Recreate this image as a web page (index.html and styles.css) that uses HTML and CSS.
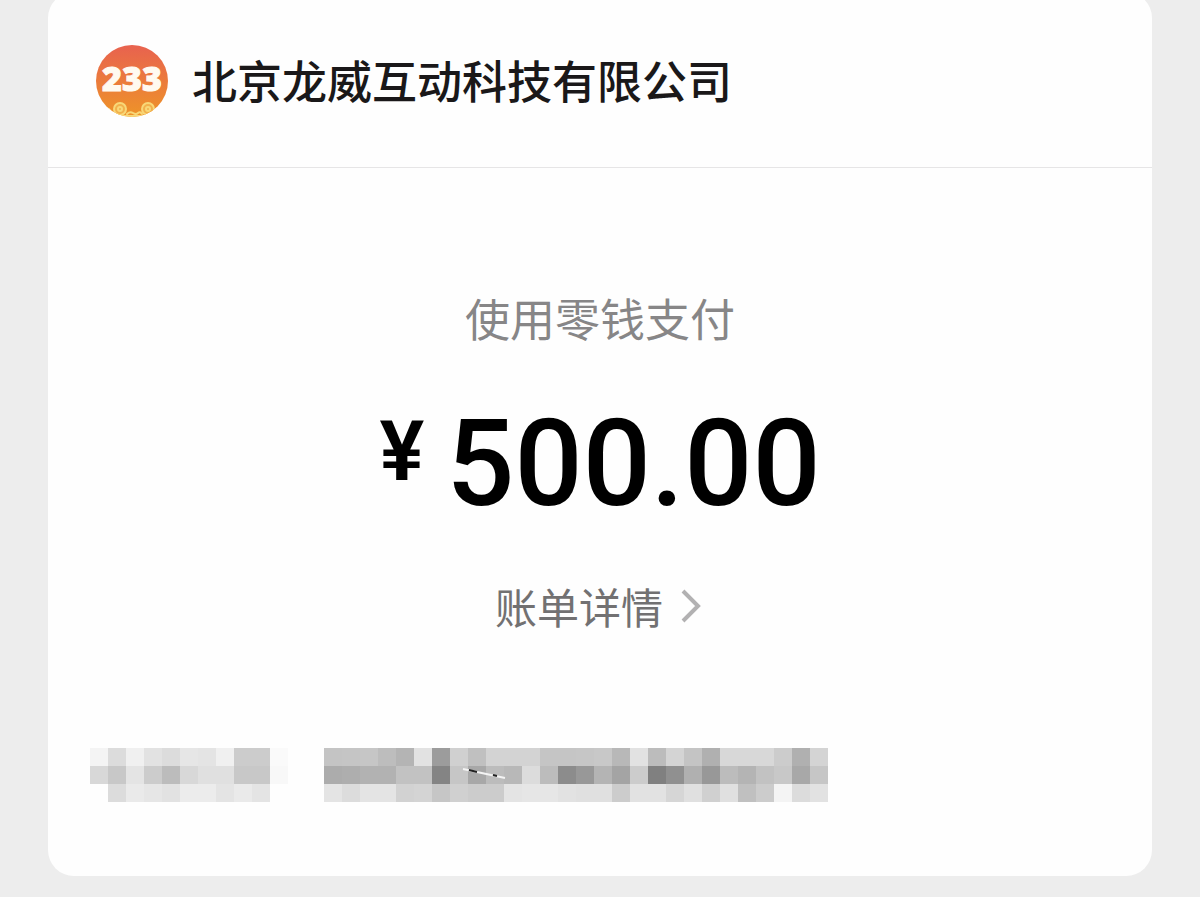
FILE: index.html
```html
<!DOCTYPE html>
<html lang="zh-CN">
<head>
  <meta charset="UTF-8" />
  <meta name="viewport" content="width=device-width, initial-scale=1" />
  <title>账单详情</title>
  <link rel="stylesheet" href="styles.css">
</head>
<body>
  <main class="card">
    <header class="merchant">
      <svg class="logo" viewBox="0 0 72 72" role="img" aria-label="233">
        <defs>
          <linearGradient id="logoBg" x1="0" y1="0" x2="0" y2="1">
            <stop offset="0" stop-color="#e8624f" />
            <stop offset="1" stop-color="#ee9428" />
          </linearGradient>
          <clipPath id="logoClip"><circle cx="36" cy="36" r="36" /></clipPath>
        </defs>
        <circle cx="36" cy="36" r="36" fill="url(#logoBg)" />
        <g clip-path="url(#logoClip)" fill="none" stroke="#f8d878" stroke-width="2" stroke-linecap="round">
          <circle cx="24" cy="64" r="6" fill="#f2b04c" />
          <circle cx="24" cy="64" r="2" />
          <circle cx="52" cy="64" r="6" fill="#f2b04c" />
          <circle cx="52" cy="64" r="2" />
          <path d="M13 64q3 5 8 6M31 69q3-3 6-1t5 0 4 1M24 71h28" />
        </g>
        <text class="logo-text" x="36" y="46" text-anchor="middle">233</text>
      </svg>
      <h1>北京龙威互动科技有限公司</h1>
    </header>

    <section class="payment">
      <p class="method">使用零钱支付</p>
      <p class="amount"><span class="currency">¥</span><span class="value">500.00</span></p>
      <a class="detail" href="#">账单详情
        <svg class="arrow" viewBox="0 0 20 34" aria-hidden="true">
          <path d="M2 2l15 15L2 32" />
        </svg>
      </a>
    </section>

    <div class="masked">
      <svg id="maskedInfo" viewBox="0 0 738 54" shape-rendering="crispEdges" aria-hidden="true"></svg>
    </div>
  </main>

  <script src="script.js"></script>
</body>
</html>
```
FILE: styles.css
```css
* {
  box-sizing: border-box;
}

body {
  margin: 0;
  background: #ededed;
  font-family: "Noto Sans CJK SC", sans-serif;
}

.card {
  margin: -8px 48px 20px;
  padding-bottom: 74px;
  background: #fefefe;
  border-radius: 26px;
}

.merchant {
  display: flex;
  align-items: center;
  gap: 24px;
  padding: 53px 48px 50px;
  border-bottom: 1px solid #e6e5e6;
}

.logo {
  flex: none;
  width: 72px;
  height: 72px;
}

.logo-text {
  font: 800 34px "Open Sans", sans-serif;
  fill: #fffaf0;
  stroke: #fffaf0;
  stroke-width: 1;
}

h1 {
  margin: 0;
  padding-bottom: 2px;
  font-size: 45px;
  font-weight: 500;
  line-height: 64px;
  color: #1a1819;
}

.payment {
  display: flex;
  flex-direction: column;
  align-items: center;
  padding-top: 118px;
}

.method {
  margin: 0;
  font-size: 45px;
  line-height: 64px;
  color: #878687;
}

.amount {
  display: flex;
  align-items: flex-start;
  gap: 22px;
  margin: 44px 0 42px;
  font-family: Roboto, sans-serif;
  font-weight: 500;
  color: #000;
}

.currency {
  padding-top: 16px;
  font-size: 84px;
  font-weight: 600;
  line-height: 84px;
}

.value {
  font-size: 120px;
  line-height: 140px;
}

.detail {
  display: flex;
  align-items: center;
  gap: 18px;
  padding-right: 4px;
  font-size: 42px;
  line-height: 60px;
  color: #727172;
  text-decoration: none;
}

.arrow {
  width: 20px;
  height: 34px;
  fill: none;
  stroke: #b2b1b2;
  stroke-width: 4;
}

.masked {
  padding: 112px 42px 0;
}

.masked svg {
  display: block;
  width: 100%;
  max-width: 738px;
}
```
FILE: script.js
```js
// Grey levels of the masked text, three rows of 18px cells per block
const blocks = [
  { x: 0, rows: [
    "f4 dc f0 e2 dc e6 e4 f0 cc cc fa",
    "d8 c8 e4 cc bc d8 e0 e0 c8 c8 f8",
    "fe dc ea e6 e2 ec ec e4 ea e4 fe"
  ] },
  { x: 234, rows: [
    "c4 c5 c6 bd b4 e2 9c d0 c0 d3 d3 d3 c5 c5 c6 c8 b8 e2 bc d4 c4 b0 d8 d8 d8 cc b0 d4",
    "ac ae b2 b2 c2 c2 84 c6 a8 bc b8 dc bc 8c 98 b4 a4 cc 80 90 b0 98 bc b4 c2 c8 a8 c6",
    "e4 dc e4 e4 d2 d4 c6 d0 cc cc e4 e6 e6 e2 e0 e0 cc e2 e2 d6 e0 d0 e0 c0 cc f4 dc e2"
  ] }
];

let cells = "";
blocks.forEach(block => {
  block.rows.forEach((row, y) => {
    row.split(" ").forEach((g, i) => {
      cells += `<rect x="${block.x + i * 18}" y="${y * 18}" width="18" height="18" fill="#${g}${g}${g}" />`;
    });
  });
});

// small scratch over the second block
cells += `<g fill="none" shape-rendering="auto">
  <path d="M373 21l42 9" stroke="#f4f4f4" stroke-width="2" />
  <path d="M379 22l8 2M403 27l4 1" stroke="#222" stroke-width="2" />
</g>`;

document.getElementById("maskedInfo").innerHTML = cells;
```
